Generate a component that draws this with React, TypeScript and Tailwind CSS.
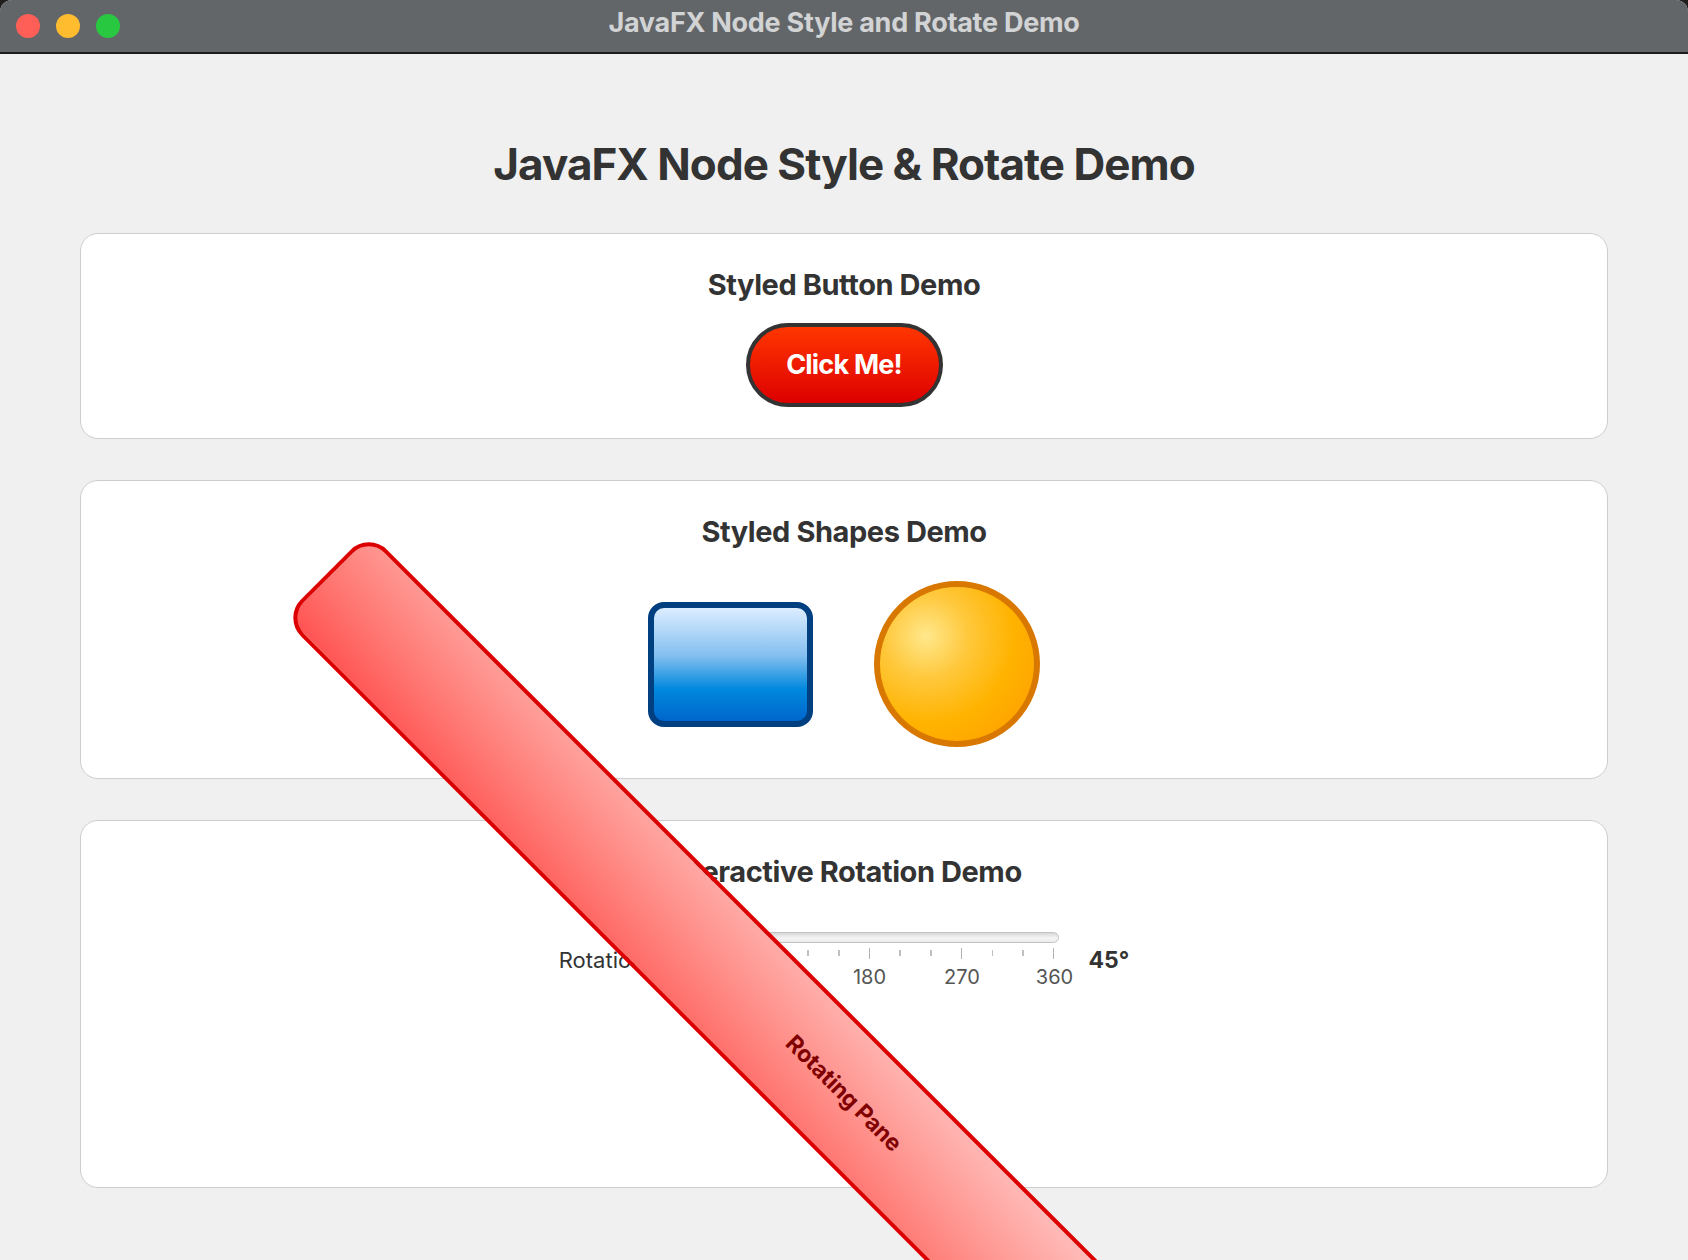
import { useState } from 'react';

function TrafficLights() {
  return (
    <div className="absolute left-[16px] top-[14px] flex gap-[16px]">
      <div className="w-[24px] h-[24px] rounded-full bg-[#ff5f57]" />
      <div className="w-[24px] h-[24px] rounded-full bg-[#febc2e]" />
      <div className="w-[24px] h-[24px] rounded-full bg-[#28c840]" />
    </div>
  );
}

function RotationSlider({ value }: { value: number }) {
  const ticks = Array.from({ length: 13 }, (_, i) => i);
  const labels = [0, 90, 180, 270, 360];
  const pct = value / 360;

  return (
    <div className="w-[398px] px-[10px] flex flex-col">
      {/* track + thumb */}
      <div className="relative h-[11px] rounded-full border border-[#c2c2c2] bg-[linear-gradient(to_bottom,#d8d8d8,#f4f4f4_55%,#ececec)]">
        <div
          className="absolute top-1/2 w-[22px] h-[22px] -translate-x-1/2 -translate-y-1/2 rounded-full border border-[#a8a8a8] bg-[linear-gradient(to_bottom,#ffffff,#dedede)] shadow-sm"
          style={{ left: `calc(4px + ${pct} * (100% - 8px))` }}
        />
      </div>

      {/* tick marks */}
      <div className="mt-[5px] mx-[4px] h-[11px] flex justify-between items-start">
        {ticks.map((i) => (
          <div
            key={i}
            className={i % 3 === 0 ? 'w-[1.5px] h-[11px] bg-[#b3b3b3]' : 'w-[1.5px] h-[6px] mt-[2px] bg-[#bfbfbf]'}
          />
        ))}
      </div>

      {/* tick labels */}
      <div className="mt-[6px] mx-[4px] flex justify-between">
        {labels.map((l) => (
          <div key={l} className="w-0 flex justify-center">
            <span className="text-[20px] leading-[24px] text-[#555555]">{l}</span>
          </div>
        ))}
      </div>
    </div>
  );
}

export default function App() {
  const [angle] = useState(45);

  return (
    <div className="w-[1688px] h-[1260px] bg-[#1e1e1e] font-['Inter',sans-serif]">
      <div className="w-full h-full rounded-t-[12px] overflow-hidden bg-[#f0f0f0] flex flex-col">
        {/* Title bar */}
        <div className="relative h-[54px] shrink-0 bg-[#636669] border-b-2 border-[#1c1c1c] flex items-center justify-center">
          <TrafficLights />
          <span className="-mt-[6px] text-[27px] font-bold text-[#d2d3d4] tracking-[-0.01em]">
            JavaFX Node Style and Rotate Demo
          </span>
        </div>

        {/* Window content */}
        <div className="px-[80px] pt-[84px] flex flex-col">
          <h1 className="text-center text-[44px] leading-[52px] font-bold text-[#333333] tracking-[-0.022em]">
            JavaFX Node Style &amp; Rotate Demo
          </h1>

          <div className="mt-[43px] flex flex-col gap-[41px]">
            {/* Styled Button Demo */}
            <div className="bg-white border-[1.5px] border-[#cdcdcd] rounded-[18px] pt-[33px] pb-[31px] flex flex-col items-center">
              <h2 className="text-[29px] leading-[36px] font-bold text-[#333333] tracking-[-0.015em]">
                Styled Button Demo
              </h2>
              <button className="mt-[20px] w-[197px] h-[84px] rounded-full border-4 border-[#333333] bg-[linear-gradient(to_bottom,#ff3600,#dd0000)] text-white text-[27px] font-bold tracking-[-0.03em]">
                Click Me!
              </button>
            </div>

            {/* Styled Shapes Demo */}
            <div className="bg-white border-[1.5px] border-[#cdcdcd] rounded-[18px] pt-[33px] pb-[31px] flex flex-col items-center">
              <h2 className="text-[29px] leading-[36px] font-bold text-[#333333] tracking-[-0.015em]">
                Styled Shapes Demo
              </h2>
              <div className="mt-[31px] flex items-center justify-center gap-[61px]">
                <div className="w-[165px] h-[125px] rounded-[16px] border-[6px] border-[#003f80] bg-[linear-gradient(to_bottom,#dcedff_0%,#84bff0_42%,#0088dd_72%,#0066cc_100%)]" />
                <div className="w-[166px] h-[166px] rounded-full border-[6px] border-[#d97800] bg-[radial-gradient(circle_at_30%_32%,#ffe88c_0%,#ffc83c_28%,#ffb300_58%,#ff9a00_100%)]" />
              </div>
            </div>

            {/* Interactive Rotation Demo */}
            <div className="bg-white border-[1.5px] border-[#cdcdcd] rounded-[18px] pt-[33px] pb-[33px] px-[30px] flex flex-col items-center">
              <h2 className="text-[29px] leading-[36px] font-bold text-[#333333] tracking-[-0.015em]">
                Interactive Rotation Demo
              </h2>

              <div className="mt-[42px] flex items-center justify-center gap-[20px]">
                <span className="text-[22px] text-[#333333]">Rotation:</span>
                <RotationSlider value={angle} />
                <span className="text-[23px] font-bold text-[#333333]">{angle}°</span>
              </div>

              <div
                className="mt-[43px] w-full h-[122px] shrink-0 rounded-[26px] border-4 border-[#dd0000] bg-linear-to-tr from-[#ff5252] to-[#ffcccc] flex items-center justify-center"
                style={{ transform: `rotate(${angle}deg)` }}
              >
                <span className="text-[23px] font-bold text-[#800000] tracking-[-0.01em]">Rotating Pane</span>
              </div>
            </div>
          </div>
        </div>
      </div>
    </div>
  );
}
